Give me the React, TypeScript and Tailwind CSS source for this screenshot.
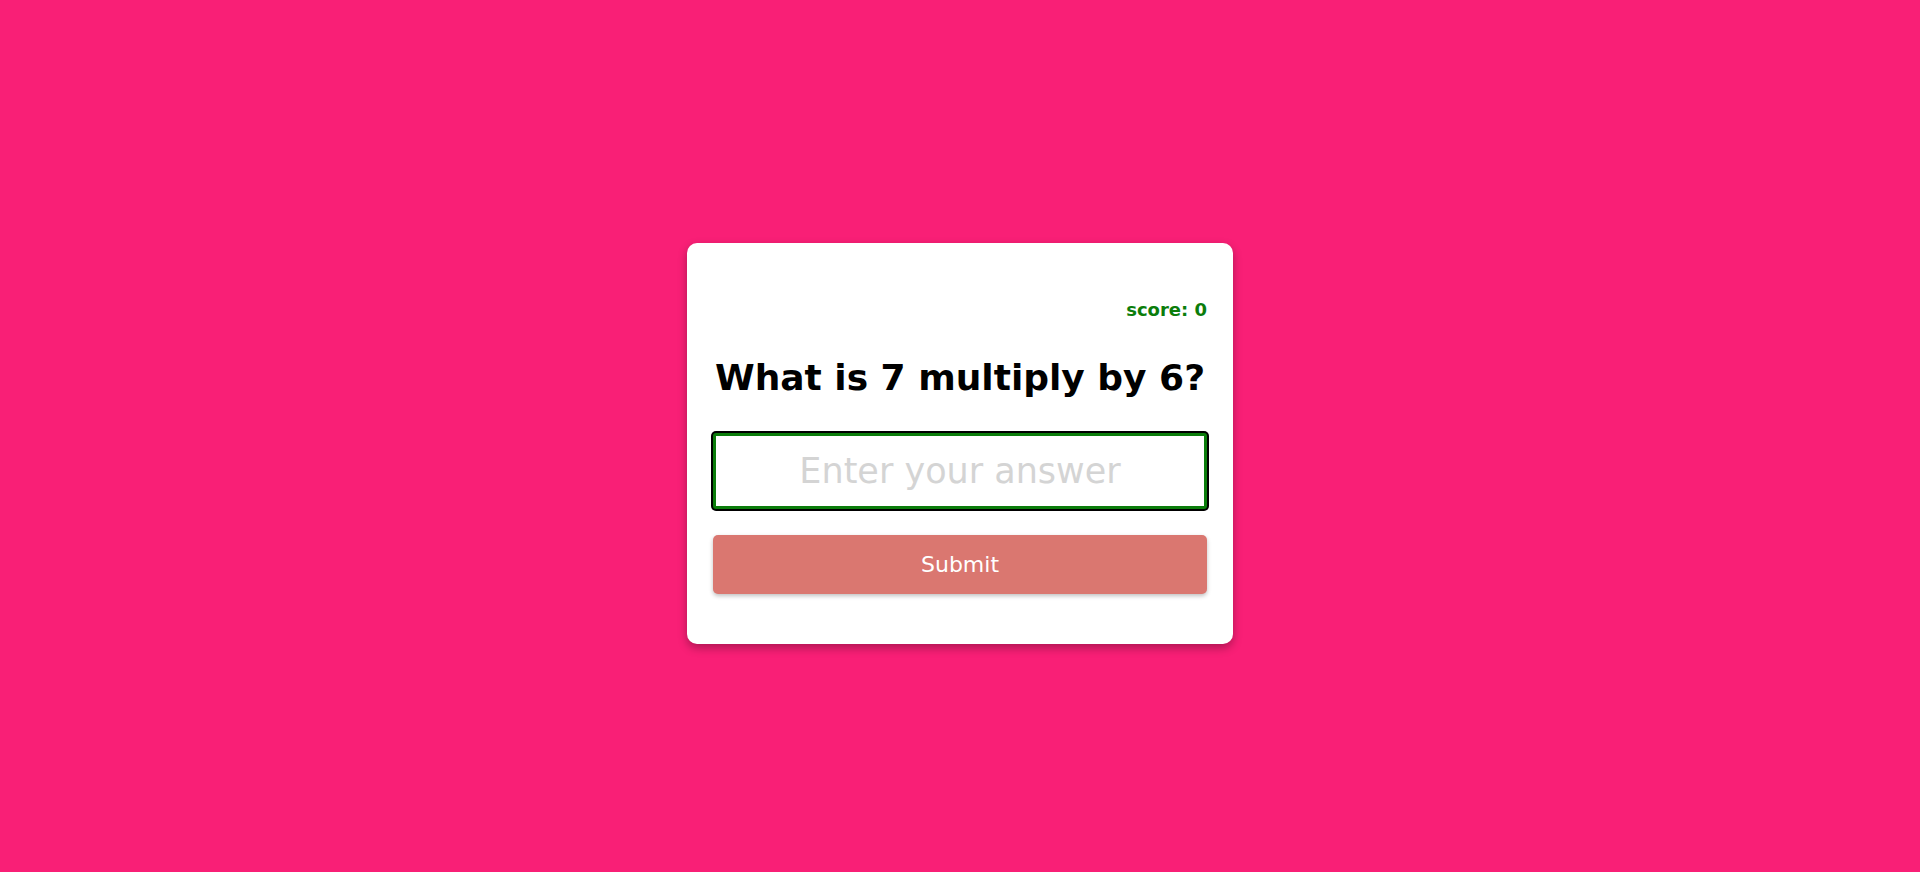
import React, { useState } from 'react';

export default function App() {
  const [answer, setAnswer] = useState('');

  return (
    <div className="min-h-screen w-full bg-[#f91f76] flex items-center justify-center font-['Comic_Sans_MS','DejaVu_Sans',sans-serif]">
      <div className="mt-[15px] w-[546px] rounded-[10px] bg-white px-[26px] pt-[53px] pb-[50px] shadow-[0_4px_10px_rgba(0,0,0,0.3)]">
        {/* score */}
        <div className="h-[28px] text-right text-[18px] leading-[28px] font-bold text-[#0b7d0b]">
          score: 0
        </div>

        {/* question */}
        <h1 className="mt-[30px] h-[48px] text-center text-[36px] leading-[48px] font-bold text-black whitespace-nowrap">
          What is 7 multiply by 6?
        </h1>

        <input
          value={answer}
          onChange={(e) => setAnswer(e.target.value)}
          placeholder="Enter your answer"
          className="mt-[31px] block h-[76px] w-full rounded-[3px] border-[3px] border-[#0b7d0b] ring-2 ring-black bg-white text-center text-[35px] text-black outline-none placeholder:text-[#d4d4d4]"
        />

        <button className="mt-[26px] block h-[59px] w-full rounded-[5px] bg-[#da7770] text-[22px] text-white shadow-[0_2px_4px_rgba(0,0,0,0.25)]">
          Submit
        </button>
      </div>
    </div>
  );
}
